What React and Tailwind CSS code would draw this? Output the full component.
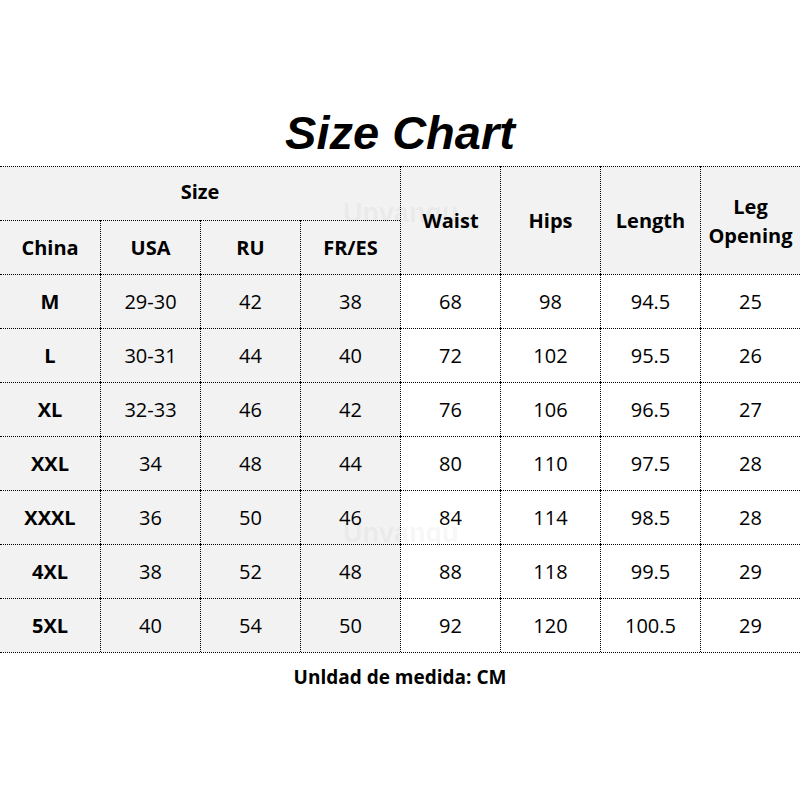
const rows = [
  ['M', '29-30', '42', '38', '68', '98', '94.5', '25'],
  ['L', '30-31', '44', '40', '72', '102', '95.5', '26'],
  ['XL', '32-33', '46', '42', '76', '106', '96.5', '27'],
  ['XXL', '34', '48', '44', '80', '110', '97.5', '28'],
  ['XXXL', '36', '50', '46', '84', '114', '98.5', '28'],
  ['4XL', '38', '52', '48', '88', '118', '99.5', '29'],
  ['5XL', '40', '54', '50', '92', '120', '100.5', '29'],
];

const line = 'border-black border-dotted';

// every cell draws its top line, and a left line unless it starts the row
function Cell({ children, first, gray, bold, className = '' }) {
  return (
    <div
      className={`h-[54px] flex items-center justify-center text-center border-t ${line} ${first ? '' : 'border-l'} ${gray ? 'bg-[#f2f2f2]' : 'bg-white'} ${bold ? 'font-bold' : ''} ${className}`}
    >
      {children}
    </div>
  );
}

export default function App() {
  return (
    <div className="relative w-[800px] h-[800px] bg-white text-black font-['Open_Sans',sans-serif] text-[20px]">
      <div className="pt-[109px] h-[166px] flex justify-center">
        <h1 className="h-[47px] leading-none italic font-bold text-[47px] font-['Liberation_Sans',Arial,sans-serif]">
          Size Chart
        </h1>
      </div>

      <div className={`grid grid-cols-8 border-b ${line}`}>
        <Cell first gray bold className="col-span-4 pb-1">Size</Cell>
        <Cell gray bold className="row-span-2 h-[108px]">Waist</Cell>
        <Cell gray bold className="row-span-2 h-[108px]">Hips</Cell>
        <Cell gray bold className="row-span-2 h-[108px]">Length</Cell>
        <Cell gray bold className="row-span-2 h-[108px] leading-[29px]">
          Leg<br />Opening
        </Cell>
        <Cell first gray bold>China</Cell>
        <Cell gray bold>USA</Cell>
        <Cell gray bold>RU</Cell>
        <Cell gray bold>FR/ES</Cell>

        {rows.map((r) =>
          r.map((v, i) => (
            <Cell key={r[0] + i} first={i === 0} gray={i < 4} bold={i === 0}>
              {v}
            </Cell>
          ))
        )}
      </div>

      <p className="mt-[10px] text-center font-bold text-[19px]">Unldad de medida: CM</p>

      <span className="pointer-events-none absolute left-[343px] top-[200px] font-bold text-[27px] leading-none font-['Liberation_Sans',Arial,sans-serif] text-black/[0.05]">
        Unvanqu
      </span>
      <span className="pointer-events-none absolute left-[343px] top-[520px] font-bold text-[27px] leading-none font-['Liberation_Sans',Arial,sans-serif] text-black/[0.05]">
        Unvanqu
      </span>
    </div>
  );
}
